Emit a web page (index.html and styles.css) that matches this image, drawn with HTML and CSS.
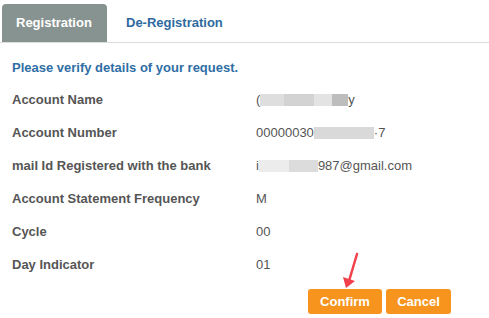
FILE: index.html
```html
<!DOCTYPE html>
<html>
<head>
<meta charset="utf-8">
<link rel="stylesheet" href="styles.css">
</head>
<body>
<div class="page">
  <div class="tabs">
    <div class="tab active">Registration</div>
    <div class="tab">De-Registration</div>
  </div>
  <div class="content">
    <div class="heading">Please verify details of your request.</div>
    <div class="row"><div class="label">Account Name</div><div class="value">(<span class="blur b1"></span><span class="blur b2"></span><span class="blur b3"></span><span class="blur b4"></span>y</div></div>
    <div class="row"><div class="label">Account Number</div><div class="value">00000030<span class="blur b5"></span>·7</div></div>
    <div class="row"><div class="label">mail Id Registered with the bank</div><div class="value">i<span class="blur b6"></span><span class="blur b7"></span>987@gmail.com</div></div>
    <div class="row"><div class="label">Account Statement Frequency</div><div class="value">M</div></div>
    <div class="row"><div class="label">Cycle</div><div class="value">00</div></div>
    <div class="row"><div class="label">Day Indicator</div><div class="value">01</div></div>
    <div class="actions">
      <button class="btn">Confirm</button>
      <button class="btn">Cancel</button>
    </div>
  </div>
  <svg class="arrow" width="30" height="42" viewBox="0 0 30 42">
    <line x1="17" y1="3" x2="9" y2="30" stroke="#f2404c" stroke-width="2.5" stroke-linecap="round"/>
    <polygon points="3,26 15,30 6,37" fill="#f2404c"/>
  </svg>
</div>
</body>
</html>
```
FILE: styles.css
```css
* { box-sizing: border-box; }
html, body { margin: 0; padding: 0; background: #fff; }
body { font-family: "Liberation Sans", Arial, sans-serif; font-size: 13px; color: #555; }
.page { position: relative; width: 489px; height: 318px; }
.tabs {
  display: flex;
  padding: 4px 0 0 2px;
  border-bottom: 1px solid #dcdcdc;
}
.tab {
  height: 38px;
  line-height: 38px;
  padding: 0 15px 0 14px;
  font-weight: bold;
  color: #2e6aa0;
  border-radius: 4px 4px 0 0;
}
.tab.active {
  background: #879391;
  color: #fff;
  width: 105px;
  margin-right: 5px;
}
.content { padding: 0 0 0 12px; }
.heading {
  margin-top: 17px;
  line-height: 16px;
  font-weight: bold;
  color: #2f6ea5;
}
.row { display: flex; height: 33px; line-height: 33px; }
.row:first-of-type { margin-top: 7px; }
.heading + .row { margin-top: 7px; }
.label { width: 244px; font-weight: bold; color: #555; }
.value { color: #555; display: flex; align-items: center; }
.blur { display: inline-block; height: 12px; background: #d6d6d6; }
.b1 { width: 24px; background: #dedede; }
.b2 { width: 30px; background: #d3d3d3; }
.b3 { width: 18px; background: #e3e3e3; }
.b4 { width: 16px; background: #bdbdbd; }
.b5 { width: 60px; background: #d9d9d9; }
.b6 { width: 30px; background: #ececec; }
.b7 { width: 29px; background: #dcdcdc; }
.actions {
  display: flex;
  justify-content: flex-end;
  gap: 4px;
  padding-right: 38px;
  margin-top: 8px;
}
.btn {
  height: 25px;
  border: none;
  border-radius: 3px;
  background: #f7941d;
  color: #fff;
  font-family: "Liberation Sans", Arial, sans-serif;
  font-size: 13px;
  font-weight: bold;
  padding: 0;
}
.btn:first-child { width: 74px; }
.btn:last-child { width: 65px; }
.arrow { position: absolute; left: 340px; top: 251px; }
```
